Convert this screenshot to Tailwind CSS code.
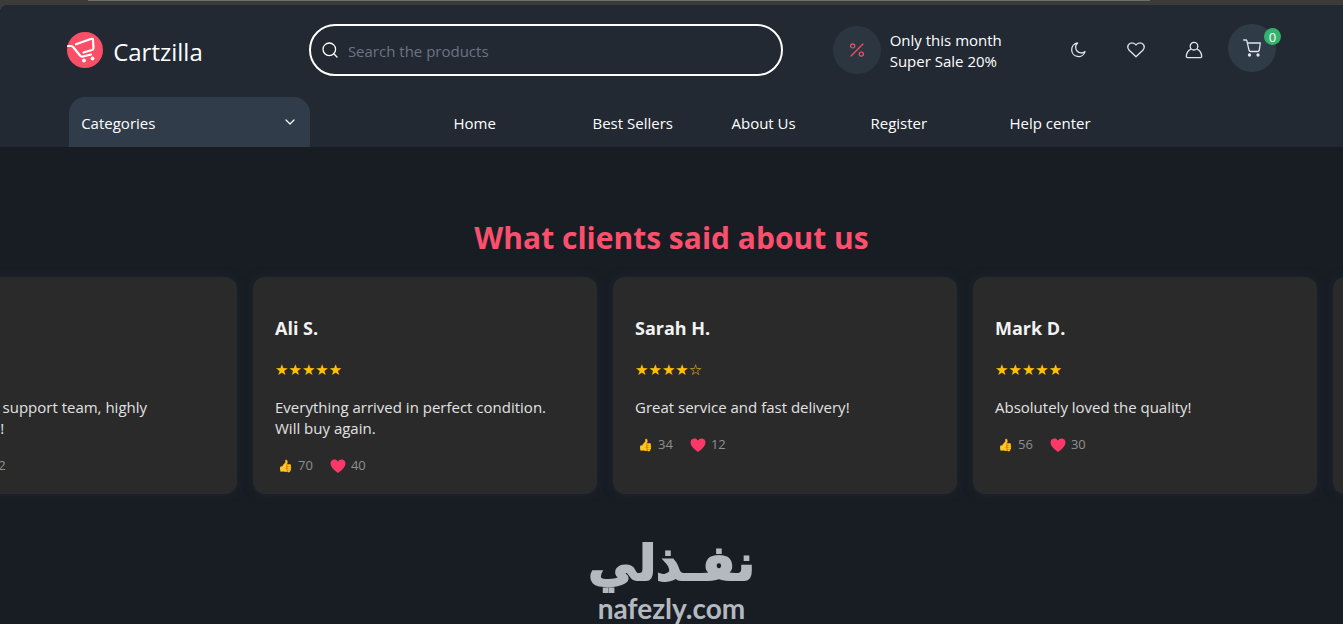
<!DOCTYPE html>
<html lang="en">
<head>
  <meta charset="UTF-8" />
  <meta name="viewport" content="width=device-width, initial-scale=1.0" />
  <title>Cartzilla | Clients</title>
  <script src="https://cdn.jsdelivr.net/npm/@tailwindcss/browser@4"></script>
</head>
<body class="min-h-screen bg-[#3b3c37] font-['Open_Sans','Noto_Sans',sans-serif] text-[15px] leading-[21px] text-white overflow-x-hidden">
  <!-- top strip -->
  <div class="h-[5px] px-[88px]">
    <div class="h-px w-[91%] bg-[#6c7163]"></div>
  </div>

  <div class="min-h-[calc(100vh-5px)] bg-[#181d24] rounded-tl-lg overflow-hidden">
    <header class="bg-[#222933] pt-[19px]">
      <div class="w-[90%] mx-auto flex items-center">
        <a href="#" class="w-[20%] flex items-center gap-[10px] text-2xl">
          <svg class="w-9 h-9" viewBox="0 0 36 36" fill="none" stroke="#fff" stroke-width="2.200" stroke-linecap="round" stroke-linejoin="round">
            <circle cx="18" cy="18" r="18" fill="#fb4f67" stroke="none" />
            <path d="M1 14 H4 Q5.500 14 6.500 15.500 L13 23.500 Q14 25 16 24.500 L24 22.500" />
            <path d="M9 12.300 L24.500 6.800 Q26 6.500 26 8 L26.500 16 Q26.500 17.500 25 18 L16.500 20.500" />
            <circle cx="17" cy="28.500" r="1.900" fill="#fff" stroke="none" />
            <circle cx="25.500" cy="26.500" r="1.900" fill="#fff" stroke="none" />
          </svg>
          <span class="pt-[3px]">Cartzilla</span>
        </a>

        <form class="w-[39.2%] h-[52px] flex items-center gap-[10px] px-[11px] border-2 border-white rounded-full">
          <svg class="w-4 h-4 shrink-0" viewBox="0 0 16 16" fill="none" stroke="#fff" stroke-width="1.300" stroke-linecap="round">
            <circle cx="7.300" cy="7.300" r="6.300" />
            <path d="M12 12 L15 15" />
          </svg>
          <input type="text" aria-label="Search the products" placeholder="Search the products" class="w-full pt-0.5 bg-transparent outline-none placeholder:text-[#6b7583]" />
        </form>

        <div class="ml-[50px] flex items-center gap-[9px]">
          <span class="w-12 h-12 rounded-full bg-[#2c3641] flex items-center justify-center">
            <svg class="w-4 h-4" viewBox="0 0 16 16" fill="none" stroke="#fb4f67" stroke-width="1.200" stroke-linecap="round">
              <path d="M2 14l12-12" />
              <circle cx="3.700" cy="3.900" r="2.100" />
              <circle cx="12.300" cy="12.100" r="2.100" />
            </svg>
          </span>
          <p class="pt-0.5">Only this month<br />Super Sale 20%</p>
        </div>

        <div class="ml-auto flex items-center gap-[42px]">
          <button type="button" aria-label="Dark mode">
            <svg class="w-4 h-4" viewBox="0 0 16 16" fill="none" stroke="#e0e5eb" stroke-width="1.300" stroke-linejoin="round">
              <path d="M7.600 1 A6.800 6.800 0 1 0 15 9.600 A5.600 5.600 0 0 1 7.600 1z" />
            </svg>
          </button>
          <button type="button" aria-label="Favorites">
            <svg class="w-4 h-4 overflow-visible" viewBox="0 0 16 16" fill="none" stroke="#e0e5eb" stroke-width="1.300" stroke-linejoin="round">
              <path d="M8 14.800 L1.200 8.200 C-2 4.600 0.800 0.800 4 0.800 C6 0.800 7.400 2 8 3 C8.600 2 10 0.800 12 0.800 C15.200 0.800 18 4.600 14.800 8.200z" />
            </svg>
          </button>
          <button type="button" aria-label="Account">
            <svg class="w-4 h-4 overflow-visible" viewBox="0 0 16 16" fill="none" stroke="#e0e5eb" stroke-width="1.300" stroke-linejoin="round">
              <circle cx="8" cy="4.200" r="3.800" />
              <path d="M5 7.200 C2 8.500 0.500 11 0.300 14.500 Q0.300 15.600 1.400 15.600 H14.600 Q15.700 15.600 15.700 14.500 C15.500 11 14 8.500 11 7.200" />
            </svg>
          </button>
          <button type="button" aria-label="Cart" class="relative -ml-4 -mt-1 w-12 h-12 rounded-full bg-[#303b48] flex items-center justify-center">
            <svg class="w-[18px] h-[18px]" viewBox="0 0 18 18" fill="none" stroke="#e0e5eb" stroke-width="1.300" stroke-linecap="round" stroke-linejoin="round">
              <path d="M0.700 1 H3 Q3.600 1 3.800 1.700 L6 11 Q6.300 12.500 7.800 12.500 H14.500 Q16 12.500 16.300 11 L17.300 4 H4.400" />
              <circle cx="6.500" cy="16" r="1" fill="#e0e5eb" />
              <circle cx="15" cy="16" r="1" fill="#e0e5eb" />
            </svg>
            <span class="absolute top-1 -right-[5px] w-[17px] h-[17px] rounded-full bg-[#33b36b] text-[13px] leading-[18px]">0</span>
          </button>
        </div>
      </div>

      <div class="w-[90%] mx-auto mt-[21px] pl-[2px] flex">
        <button type="button" class="w-[20%] h-[50px] px-3 flex items-center justify-between bg-[#313c4a] rounded-t-2xl">
          <span class="pt-0.5">Categories</span>
          <svg class="w-4 h-4" viewBox="0 0 16 16" fill="none" stroke="#fff" stroke-width="1.200" stroke-linecap="round" stroke-linejoin="round">
            <path d="M4 6 L8 10 L12 6" />
          </svg>
        </button>
        <nav class="ml-[143px] pt-0.5 flex-1 flex items-center *:w-[139px] *:shrink-0">
          <a href="#">Home</a>
          <a href="#">Best Sellers</a>
          <a href="#">About Us</a>
          <a href="#">Register</a>
          <a href="#">Help center</a>
        </nav>
      </div>
    </header>

    <main class="pt-[71px]">
      <h1 class="text-center text-[30px] leading-10 font-bold text-[#fb4f6c]">What clients said about us</h1>

      <!-- clients slider -->
      <section class="mt-[19px] -ml-[107px] flex gap-4 text-[#e2e2e2] *:w-[344px] *:shrink-0 *:rounded-xl *:bg-[#2a2a2a] *:px-[22px] *:pt-[39px] *:pb-[18px] *:shadow-[0_0_8px_#1e2530]">
        <article>
          <h2 class="text-lg leading-6 font-bold text-[#f2f2f2]">John K.</h2>
          <p class="mt-5 font-['DejaVu_Sans'] text-[15px] leading-[21px] text-[#ffc107]">★★★★★</p>
          <p class="mt-4">Remarkable support team, highly recommend!</p>
          <p class="mt-4 flex gap-[15px] text-[13px] text-[#8f8f8f]">
            <span class="flex items-center gap-[3px]"><span class="w-5 text-center text-xs">👍</span>85</span>
            <span class="flex items-center gap-[3px]"><svg class="w-5 h-[14px]" viewBox="0 0 20 14" fill="#fb3868"><path d="M10 14 C5 10.500 2.500 7.500 2.500 4.200 C2.500 0.200 8 -1 10 2.500 C12 -1 17.500 0.200 17.500 4.200 C17.500 7.500 15 10.500 10 14z" /></svg>22</span>
          </p>
        </article>
        <article>
          <h2 class="text-lg leading-6 font-bold text-[#f2f2f2]">Ali S.</h2>
          <p class="mt-5 font-['DejaVu_Sans'] text-[15px] leading-[21px] text-[#ffc107]">★★★★★</p>
          <p class="mt-4">Everything arrived in perfect condition. Will buy again.</p>
          <p class="mt-4 flex gap-[15px] text-[13px] text-[#8f8f8f]">
            <span class="flex items-center gap-[3px]"><span class="w-5 text-center text-xs">👍</span>70</span>
            <span class="flex items-center gap-[3px]"><svg class="w-5 h-[14px]" viewBox="0 0 20 14" fill="#fb3868"><path d="M10 14 C5 10.500 2.500 7.500 2.500 4.200 C2.500 0.200 8 -1 10 2.500 C12 -1 17.500 0.200 17.500 4.200 C17.500 7.500 15 10.500 10 14z" /></svg>40</span>
          </p>
        </article>
        <article>
          <h2 class="text-lg leading-6 font-bold text-[#f2f2f2]">Sarah H.</h2>
          <p class="mt-5 font-['DejaVu_Sans'] text-[15px] leading-[21px] text-[#ffc107]">★★★★☆</p>
          <p class="mt-4">Great service and fast delivery!</p>
          <p class="mt-4 flex gap-[15px] text-[13px] text-[#8f8f8f]">
            <span class="flex items-center gap-[3px]"><span class="w-5 text-center text-xs">👍</span>34</span>
            <span class="flex items-center gap-[3px]"><svg class="w-5 h-[14px]" viewBox="0 0 20 14" fill="#fb3868"><path d="M10 14 C5 10.500 2.500 7.500 2.500 4.200 C2.500 0.200 8 -1 10 2.500 C12 -1 17.500 0.200 17.500 4.200 C17.500 7.500 15 10.500 10 14z" /></svg>12</span>
          </p>
        </article>
        <article>
          <h2 class="text-lg leading-6 font-bold text-[#f2f2f2]">Mark D.</h2>
          <p class="mt-5 font-['DejaVu_Sans'] text-[15px] leading-[21px] text-[#ffc107]">★★★★★</p>
          <p class="mt-4">Absolutely loved the quality!</p>
          <p class="mt-4 flex gap-[15px] text-[13px] text-[#8f8f8f]">
            <span class="flex items-center gap-[3px]"><span class="w-5 text-center text-xs">👍</span>56</span>
            <span class="flex items-center gap-[3px]"><svg class="w-5 h-[14px]" viewBox="0 0 20 14" fill="#fb3868"><path d="M10 14 C5 10.500 2.500 7.500 2.500 4.200 C2.500 0.200 8 -1 10 2.500 C12 -1 17.500 0.200 17.500 4.200 C17.500 7.500 15 10.500 10 14z" /></svg>30</span>
          </p>
        </article>
        <article></article>
      </section>

      <footer class="mt-10 flex flex-col items-center font-bold text-[#b4b9c0]">
        <span lang="ar" dir="rtl" class="font-['DejaVu_Sans'] text-[49px] leading-[60px] [-webkit-text-stroke:2px_#b4b9c0]">نفـذلي</span>
        <span class="font-['Lato'] text-[28px] leading-7">nafezly.com</span>
      </footer>
    </main>
  </div>
</body>
</html>
